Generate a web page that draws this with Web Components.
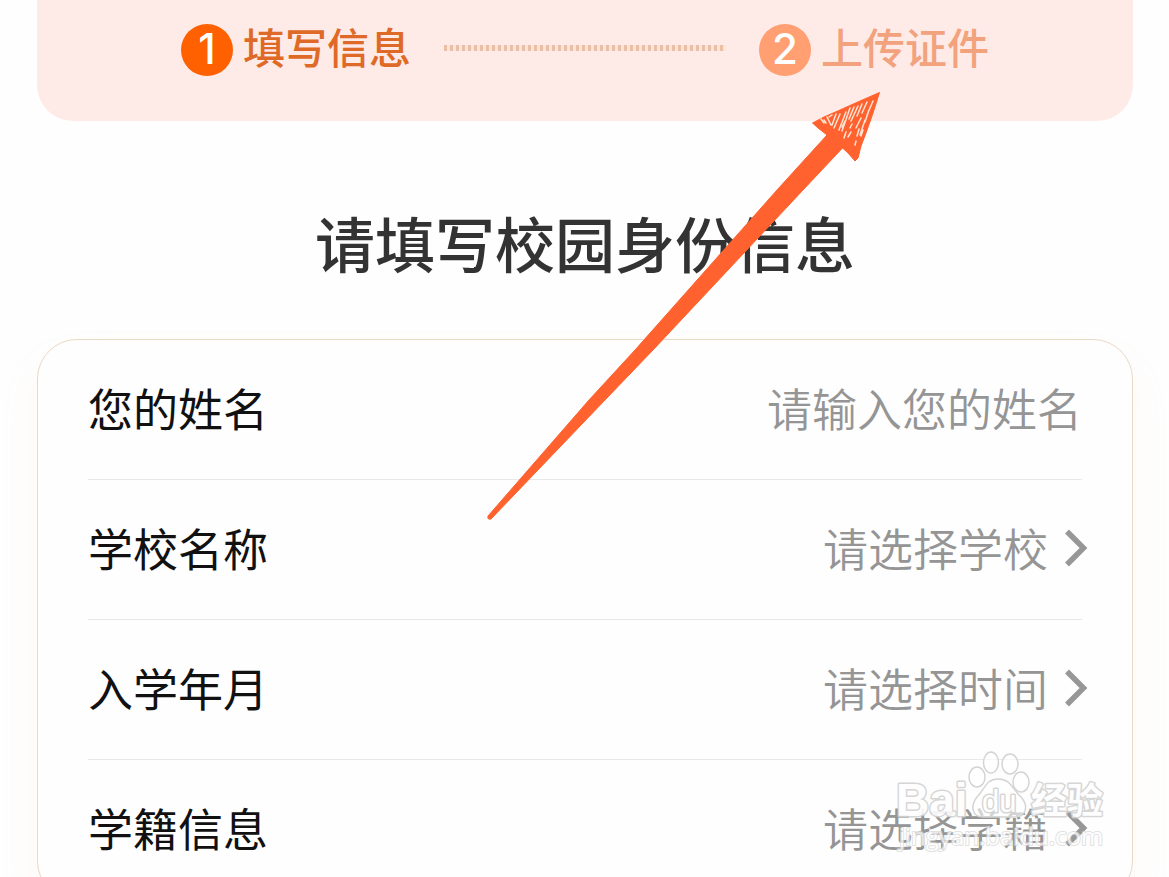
<!DOCTYPE html>
<html lang="zh-CN">
<head>
<meta charset="utf-8">
<meta name="viewport" content="width=device-width, initial-scale=1">
<title>请填写校园身份信息</title>
<style>
  html { background: #fefefe; scrollbar-width: none; }
  body { margin: 0; font-family: "Noto Sans CJK SC", sans-serif; color: #111; }
</style>
</head>
<body>
<campus-page>
  <step-bar slot="steps">
    <step-item number="1" active>填写信息</step-item>
    <step-item number="2">上传证件</step-item>
  </step-bar>
  <form-card>
    <text-row label="您的姓名" hint="请输入您的姓名"></text-row>
    <pick-row label="学校名称" hint="请选择学校"></pick-row>
    <pick-row label="入学年月" hint="请选择时间"></pick-row>
    <pick-row label="学籍信息" hint="请选择学籍"></pick-row>
  </form-card>
  <pointer-arrow slot="overlay"></pointer-arrow>
  <site-watermark slot="overlay"></site-watermark>
</campus-page>

<script>
const define = (name, html, setup) => {
  const template = document.createElement('template');
  template.innerHTML = html;
  customElements.define(name, class extends HTMLElement {
    connectedCallback() {
      if (this.shadowRoot) return;
      const root = this.attachShadow({ mode: 'open' });
      root.append(template.content.cloneNode(true));
      if (setup) setup(this, root);
    }
  });
};

define('campus-page', `
  <style>
    :host { display: block; position: relative; overflow: hidden; }
    main { padding: 0 36px 40px 37px; }
    h1 { margin: 0; padding: 76px 0 52px; font-size: 60px; line-height: 90px; font-weight: 500; color: #333; text-align: center; }
  </style>
  <main>
    <slot name="steps"></slot>
    <h1>请填写校园身份信息</h1>
    <slot></slot>
  </main>
  <slot name="overlay"></slot>
`);

define('step-bar', `
  <style>
    :host { display: block; background: #feebe8; border-radius: 0 0 36px 36px; }
    nav { display: flex; justify-content: center; align-items: center; gap: 33px; padding: 24px 0 45px; }
    .dots { order: 1; width: 282px; height: 6px; margin-bottom: 4px;
      background: repeating-linear-gradient(90deg, #e9bfa6 0 3px, #fee3d6 3px 6px); }
    ::slotted(:last-child) { order: 2; }
  </style>
  <nav><slot></slot><span class="dots"></span></nav>
`);

define('step-item', `
  <style>
    :host { display: flex; align-items: center; gap: 10px; color: #f2a27c; font-size: 42px; line-height: 44px; font-weight: 500; --disc: #ff9f72; }
    :host([active]) { color: #df6a27; --disc: #ff6000; }
    b { width: 52px; height: 52px; border-radius: 50%; background: var(--disc); color: #fff;
      font: 500 42px/50px "Inter", sans-serif; text-align: center; }
    span { padding-bottom: 8px; }
  </style>
  <b></b><span><slot></slot></span>
`, (host, root) => {
  root.querySelector('b').textContent = host.getAttribute('number');
});

define('form-card', `
  <style>
    :host { display: block; padding: 0 50px; border: 1px solid #ead9c4; border-radius: 40px; background: #fefefe;
      box-shadow: 0 24px 40px rgba(250, 190, 150, .08); }
    ::slotted(:not(:last-child)) { border-bottom: 1px solid #e8e8e8; }
  </style>
  <form><slot></slot></form>
`);

const rowStyle = `
  :host { display: flex; align-items: center; box-sizing: border-box; height: 140px; padding-bottom: 4px; font-size: 45px; line-height: 68px; }
  label { flex: none; }
  input, select { flex: 1; min-width: 0; height: 68px; margin: 0; padding: 0; border: 0; outline: 0; background: none;
    appearance: none; font: inherit; font-weight: 350; color: #959595; text-align: right; text-align-last: right; }
  input::placeholder { color: #959595; opacity: 1; }
  svg { flex: none; width: 24px; height: 40px; margin: 0 -6px 0 16px; }
`;
const setLabel = (host, root) => {
  root.querySelector('label').textContent = host.getAttribute('label');
};

define('text-row', `
  <style>${rowStyle}</style>
  <label for="field"></label><input id="field" type="text">
`, (host, root) => {
  setLabel(host, root);
  root.querySelector('input').placeholder = host.getAttribute('hint');
});

define('pick-row', `
  <style>${rowStyle}</style>
  <label for="field"></label><select id="field"><option></option></select>
  <svg viewBox="0 0 24 40" aria-hidden="true"><path d="M3 3.500L19.500 20L3 36.500" fill="none" stroke="#979797" stroke-width="5.500"/></svg>
`, (host, root) => {
  setLabel(host, root);
  root.querySelector('option').textContent = host.getAttribute('hint');
});

define('pointer-arrow', `
  <style>
    :host { position: absolute; left: 480px; top: 84px; pointer-events: none; }
    svg { display: block; width: 408px; height: 442px; }
  </style>
  <svg viewBox="480 84 408 442" aria-hidden="true">
    <path d="M879.500 92.500L873 113L866 133L861 146L858 158L855 161L848 153L842.500 148L803 190L653 350L605 400L491 519Q487 520 488 516L589 400L635 350L777 190L827 135L818 128L812.500 123L824 117L840 110L860 101Z" fill="#ff622e" stroke="#ff622e" stroke-width="1" stroke-linejoin="round"/>
    <g stroke="#ffe4d6" stroke-width="1.500" stroke-linecap="round" fill="none">
      <path d="M821 119l3 4M827 117l4 8M832 115l-3 2M836 114l-4 11M840 114l-6 14M846 112l-7 18M850 108l-8 23M854 107l-5 12M858 106l-7 15M862 104l-5 12M867 102l-5 11M873 101l-6 14M869 110l-4 12M861 118l-5 10M865 120l-5 15M859 129l-2 7M852 124l-2 4M851 132l-3 5M846 132l-2 6M856 141l-1 4M863 130l-2 6M845 121l-3 6M824 120l2 3"/>
    </g>
  </svg>
`);

define('site-watermark', `
  <style>
    :host { position: absolute; left: 890px; top: 745px; pointer-events: none; }
    svg { display: block; width: 224px; height: 116px; }
    text { paint-order: stroke; stroke-linejoin: round; }
  </style>
  <svg viewBox="890 745 224 116">
    <g fill="#fff" fill-opacity=".6" stroke="#d4d4d4" stroke-width="1.500">
      <ellipse cx="991" cy="762.500" rx="7.500" ry="10.500"/>
      <ellipse cx="1010" cy="764" rx="8" ry="10"/>
      <ellipse cx="977" cy="777" rx="8" ry="10"/>
      <ellipse cx="1021" cy="782" rx="8" ry="10"/>
      <path d="M998 779C1011 779 1012 789 1021 797C1029 806 1026 817 1015 817H983C972 817 970 806 977 797C985 789 986 779 998 779Z"/>
    </g>
    <g fill="#fff" stroke="#d2d2d2" stroke-width="3" opacity=".9">
      <text x="896" y="816" font-family="Liberation Sans, sans-serif" font-weight="700" font-size="46">Bai</text>
      <text x="982" y="812" font-family="Liberation Sans, sans-serif" font-weight="400" font-size="31">du</text>
      <text x="1031" y="814" font-family="Noto Sans CJK SC, sans-serif" font-weight="700" font-size="36">经验</text>
    </g>
    <text x="899" y="845" font-family="Open Sans, sans-serif" font-size="24" fill="#fff" stroke="#d8d8d8" stroke-width="2" opacity=".75">jingyan.baidu.com</text>
  </svg>
`);
</script>
</body>
</html>
